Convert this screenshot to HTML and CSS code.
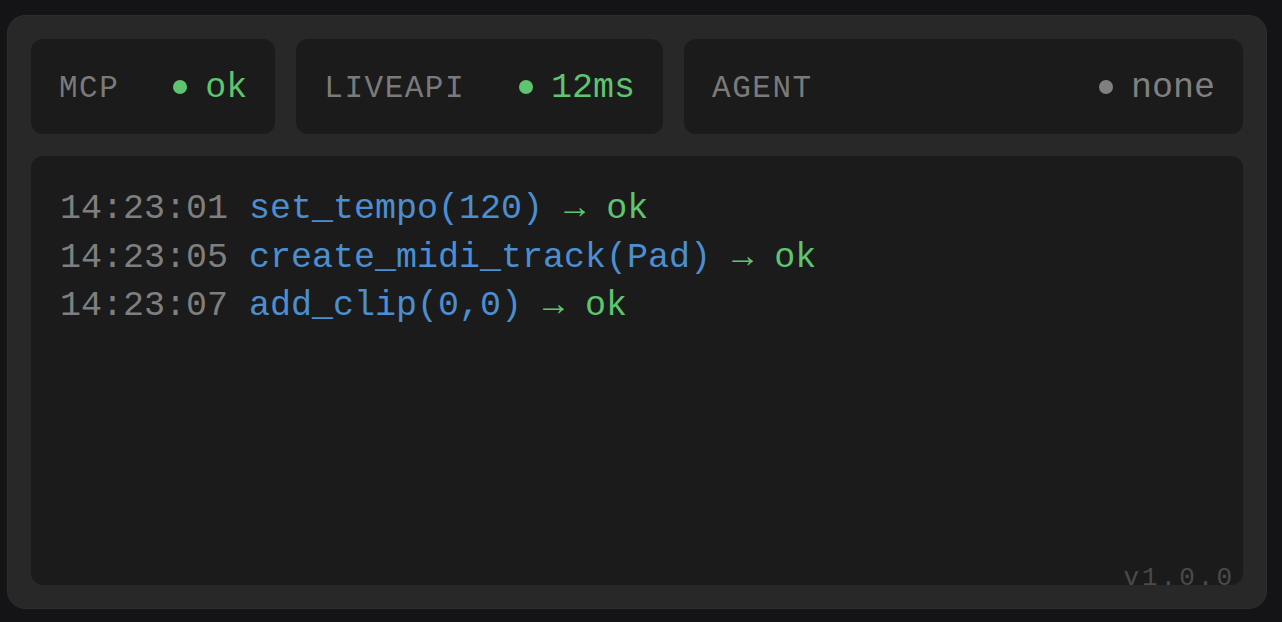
FILE: index.html
```html
<!DOCTYPE html>
<html>
<head>
<meta charset="utf-8">
<link rel="stylesheet" href="styles.css">
</head>
<body>
<div class="panel">
  <div class="tiles">
    <div class="tile">
      <span class="label">MCP</span>
      <span class="status"><span class="dot ok"></span><span class="value ok">ok</span></span>
    </div>
    <div class="tile">
      <span class="label">LIVEAPI</span>
      <span class="status"><span class="dot ok"></span><span class="value ok">12ms</span></span>
    </div>
    <div class="tile grow">
      <span class="label">AGENT</span>
      <span class="status"><span class="dot idle"></span><span class="value idle">none</span></span>
    </div>
  </div>
  <div class="log">
    <div class="line"><span class="time">14:23:01</span> <span class="call">set_tempo(120)</span> <span class="res">→ ok</span></div>
    <div class="line"><span class="time">14:23:05</span> <span class="call">create_midi_track(Pad)</span> <span class="res">→ ok</span></div>
    <div class="line"><span class="time">14:23:07</span> <span class="call">add_clip(0,0)</span> <span class="res">→ ok</span></div>
  </div>
  <div class="version">v1.0.0</div>
</div>
</body>
</html>
```
FILE: styles.css
```css
html, body {
  margin: 0;
  background: #141416;
}
body {
  padding: 15px 15px 13px 7px;
  box-sizing: border-box;
  height: 622px;
  font-family: "Liberation Mono", "Courier New", monospace;
}
.panel {
  position: relative;
  box-sizing: border-box;
  height: 594px;
  background: #282828;
  border: 1px solid #2c2c2c;
  border-radius: 18px;
  padding: 23px;
  display: flex;
  flex-direction: column;
  gap: 22px;
}
.tiles {
  display: flex;
  gap: 21px;
  height: 95px;
  flex-shrink: 0;
}
.tile {
  background: #1b1b1b;
  border-radius: 12px;
  display: flex;
  align-items: center;
  justify-content: space-between;
  gap: 54px;
  padding: 0 28px;
}
.tile.grow {
  flex: 1;
}
.label {
  font-size: 31px;
  letter-spacing: 1.5px;
  color: #7a7a7a;
  padding-top: 3px;
}
.status {
  display: flex;
  align-items: center;
  gap: 18px;
}
.dot {
  width: 14px;
  height: 14px;
  border-radius: 50%;
}
.dot.ok { background: #5ec46f; }
.dot.idle { background: #808080; }
.value {
  font-size: 35px;
  padding-top: 3px;
}
.value.ok { color: #5ec46f; }
.value.idle { color: #808080; }
.log {
  flex: 1;
  min-height: 0;
  background: #1b1b1b;
  border-radius: 12px;
  padding: 29px 29px 26px;
  font-size: 35px;
  line-height: 48.5px;
}
.line {
  white-space: pre;
}
.time { color: #7f7f7f; }
.call { color: #4b8fd1; }
.res { color: #5ec46f; }
.version {
  position: absolute;
  right: 31px;
  bottom: 15px;
  font-size: 26px;
  letter-spacing: 3px;
  color: #4a4a4a;
}
```
